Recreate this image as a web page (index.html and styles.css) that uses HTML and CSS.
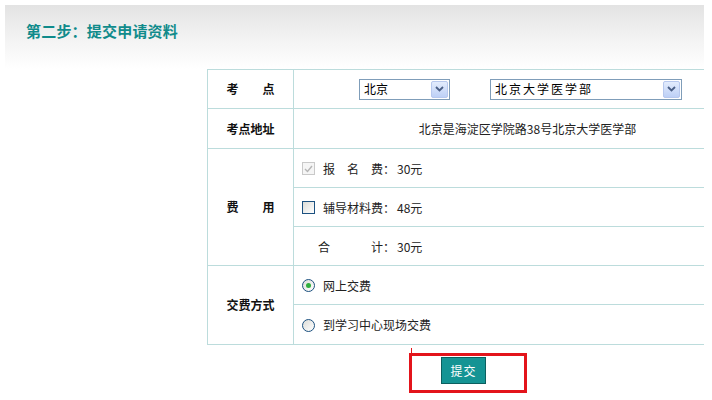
FILE: index.html
```html
<!DOCTYPE html>
<html lang="zh-CN">
<head>
<meta charset="utf-8">
<title>第二步：提交申请资料</title>
<link rel="stylesheet" href="styles.css">
</head>
<body>
<div class="page">
  <div class="header">
    <h2 class="title">第二步：提交申请资料</h2>
  </div>
  <table class="form">
    <tr class="r1">
      <th>考　　点</th>
      <td>
        <div class="selects">
          <div class="select s-city"><span class="sel-text">北京</span><span class="sel-btn"><svg width="9" height="6" viewBox="0 0 9 6"><path d="M1 1 L4.5 4.5 L8 1" fill="none" stroke="#4a5f86" stroke-width="1.8"/></svg></span></div>
          <div class="select s-site"><span class="sel-text spaced">北京大学医学部</span><span class="sel-btn"><svg width="9" height="6" viewBox="0 0 9 6"><path d="M1 1 L4.5 4.5 L8 1" fill="none" stroke="#4a5f86" stroke-width="1.8"/></svg></span></div>
        </div>
      </td>
    </tr>
    <tr class="r2">
      <th>考点地址</th>
      <td class="addr">北京是海淀区学院路38号北京大学医学部</td>
    </tr>
    <tr class="r3">
      <th rowspan="3">费　　用</th>
      <td class="opt"><span class="cb cb-disabled"><svg width="9" height="8" viewBox="0 0 9 8"><path d="M1 4 L3.5 6.5 L8 1" fill="none" stroke="#b5b5b5" stroke-width="1.4"/></svg></span><span class="lbl">报名费</span><span class="colon">：</span><span class="val">30元</span></td>
    </tr>
    <tr class="r4">
      <td class="opt"><span class="cb"></span><span class="lbl">辅导材料费</span><span class="colon">：</span><span class="val">48元</span></td>
    </tr>
    <tr class="r5">
      <td class="opt total"><span class="lbl wide">合计</span><span class="colon">：</span><span class="val">30元</span></td>
    </tr>
    <tr class="r6">
      <th rowspan="2">交费方式</th>
      <td class="opt"><span class="radio checked"></span><span class="text">网上交费</span></td>
    </tr>
    <tr class="r7">
      <td class="opt"><span class="radio"></span><span class="text">到学习中心现场交费</span></td>
    </tr>
  </table>
  <div class="actions">
    <div class="highlight">
      <button class="submit" type="button">提交</button>
    </div>
  </div>
</div>
</body>
</html>
```

FILE: styles.css
```css
html, body {
  margin: 0;
  padding: 0;
  background: #ffffff;
}

body {
  font-family: "Noto Sans CJK SC", "Liberation Sans", sans-serif;
  font-size: 12px;
  color: #222222;
}

.page {
  margin: 5px 0 0 5px;
  width: 699px;
  height: 395px;
  overflow: hidden;
}

.header {
  height: 64px;
  background: linear-gradient(#e3e3e3 0%, #f2f2f2 50%, #ffffff 100%);
}

.title {
  margin: 0;
  padding: 16px 0 0 21px;
  font-size: 15px;
  line-height: 20px;
  font-weight: bold;
  color: #108b8b;
  letter-spacing: 0.2px;
}

.form {
  margin-left: 202px;
  width: 555px;
  border-collapse: collapse;
  table-layout: fixed;
}

.form th,
.form td {
  border: 1px solid #bcdcdc;
  padding: 0;
  height: 38px;
  line-height: 16px;
}

.form th {
  width: 85px;
  font-weight: bold;
  color: #111111;
  text-align: center;
}

.form tr.r2 td, .form tr.r2 th,
.form tr.r7 td {
  height: 39px;
}

.selects {
  display: flex;
  align-items: center;
  gap: 40px;
  padding-left: 65px;
}

.select {
  display: flex;
  align-items: center;
  height: 21px;
  box-sizing: border-box;
  border: 1px solid #7f9db9;
  background: #ffffff;
}

.s-city { width: 91px; }
.s-site { width: 192px; }

.sel-text {
  flex: 1;
  padding-left: 4px;
  color: #000000;
  white-space: nowrap;
}

.sel-text.spaced {
  letter-spacing: 2px;
}

.sel-btn {
  width: 15px;
  height: 15px;
  margin-right: 1px;
  display: flex;
  align-items: center;
  justify-content: center;
  border: 1px solid #b7c8ee;
  border-radius: 2px;
  background: linear-gradient(#e3ecfd, #bdd0f6);
}

.addr {
  text-align: center;
  color: #222222;
}

.opt {
  padding-left: 8px !important;
  white-space: nowrap;
}

.opt > span {
  display: inline-block;
  vertical-align: middle;
}

.cb {
  width: 13px;
  height: 13px;
  box-sizing: border-box;
  border: 1px solid #1c5180;
  background: linear-gradient(135deg, #dcdcd7, #ffffff);
  margin-right: 8px;
  position: relative;
}

.cb-disabled {
  border-color: #c9c9c9;
  background: #f5f5f5;
  display: inline-flex !important;
  align-items: center;
  justify-content: center;
}

.lbl {
  width: 60px;
  text-align: justify;
  text-align-last: justify;
}

.lbl.wide {
  width: 65px;
}

.total {
  padding-left: 24px !important;
}

.colon {
  width: 14px;
}

.val {
  color: #222222;
}

.radio {
  width: 13px;
  height: 13px;
  box-sizing: border-box;
  border: 1px solid #1c5180;
  border-radius: 50%;
  background: linear-gradient(135deg, #dcdcd7, #ffffff);
  margin-right: 8px;
  position: relative;
}

.radio.checked::after {
  content: "";
  position: absolute;
  left: 3px;
  top: 3px;
  width: 5px;
  height: 5px;
  border-radius: 50%;
  background: #2fae3c;
}

.actions {
  padding: 8px 0 0 404px;
}

.highlight {
  position: relative;
  width: 118px;
  height: 40px;
  box-sizing: border-box;
  border: 3px solid #e3141b;
  padding: 1px 0 0 29px;
}

.highlight::before {
  content: "";
  position: absolute;
  left: -1px;
  top: -8px;
  width: 1px;
  height: 5px;
  background: #e3141b;
}

.submit {
  display: block;
  width: 45px;
  height: 27px;
  padding: 0;
  margin: 0;
  border: 1px solid #0b5f5f;
  background: #149494;
  color: #ffffff;
  font-family: "Noto Sans CJK SC", "Liberation Sans", sans-serif;
  font-size: 12px;
  letter-spacing: 1px;
}
```
